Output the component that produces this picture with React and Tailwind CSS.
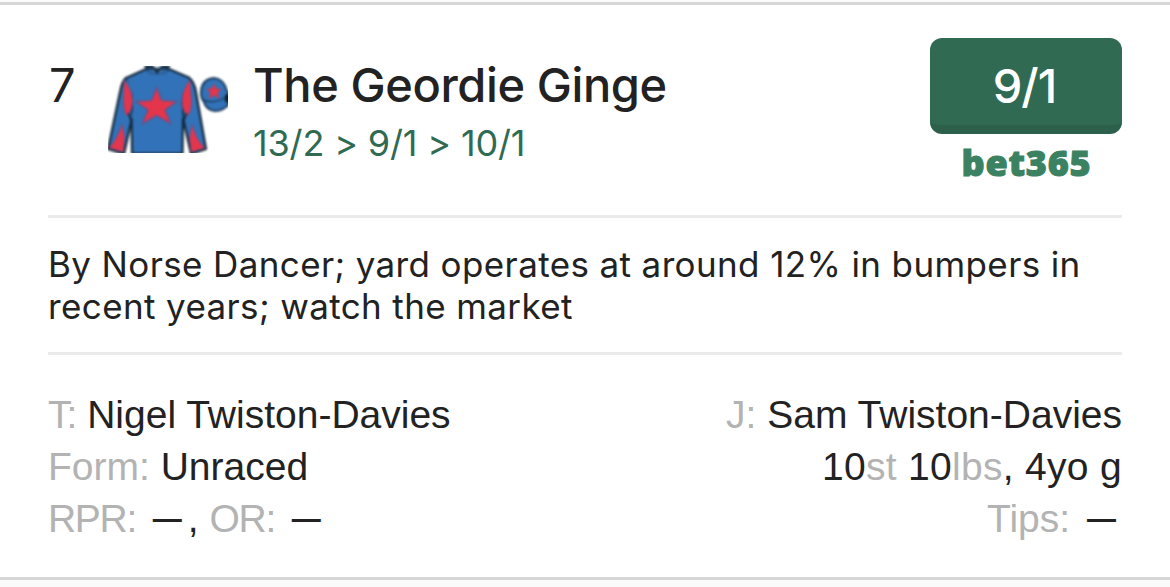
import React from 'react';

const runner = {
  number: 7,
  name: 'The Geordie Ginge',
  history: ['13/2', '9/1', '10/1'],
  odds: '9/1',
  bookmaker: 'bet365',
  comment:
    'By Norse Dancer; yard operates at around 12% in bumpers in recent years; watch the market',
  trainer: 'Nigel Twiston-Davies',
  jockey: 'Sam Twiston-Davies',
  form: 'Unraced',
};

const Silks = () => (
  <svg viewBox="0 0 120 87" className="w-[120px] h-[87px] shrink-0 overflow-hidden" aria-hidden="true">
    <g className="blur-[0.8px]">
      {/* sleeves */}
      <g stroke="#14283a" strokeWidth="2.2" strokeLinejoin="round">
        <path d="M18 12 Q14 15 12 26 L0 83 L16 88 L24 52 L25 20 Z" fill="#3272b8" />
        <path d="M81 12 Q86 15 88 26 L98 83 L83 88 L75 52 L73 20 Z" fill="#3272b8" />
      </g>
      <g fill="#e5354b" stroke="#65508b" strokeWidth="0.8">
        <path d="M16 14 Q24.500 24 24.500 35 Q24.500 44 19 50 Q15.500 46 15.500 36 Z" />
        <path d="M82 14 Q74 24 74 35 Q74 44 79 50 Q83.500 46 83.500 36 Z" />
        <path d="M14 58 L16.500 70 L15.500 86 L1 82 Q10 72 14 58 Z" />
        <path d="M84 58 Q88 74 97 82 L83 86 L81.500 72 Z" />
      </g>
      {/* body */}
      <path
        d="M38 3 L18 12 Q25 22 25 36 Q25 46 23 52 L24 88 H75 L75 52 Q73.500 46 73.500 36 Q73.500 22 82 12 L61 3 L49 7 Z"
        fill="#3272b8"
      />
      <path d="M38 3 L18 12 M61 3 L82 12 M23.500 52 L24 88 M75 52 L74.500 88 M24 87.500 H75" stroke="#14283a" strokeWidth="2.2" fill="none" />
      <path d="M20.500 47 L23.500 56 M78.500 47 L75 56" stroke="#14283a" strokeWidth="1.8" />
      {/* collar */}
      <path d="M36 -1 H62 L61 5 L53 4 L49 9 L45 4 L38 5 Z" fill="#1b3650" />
      <path d="M38 5 L43 3 L49 8 L55 3 L61 5 L58 9 H41 Z" fill="#2c65a4" />
      <path d="M45 -1 H54 Q52 2 49.500 2 Q46 2 45 -1 Z" fill="#e8edf0" />
      <path
        d="M48.5 21 L53.5 34.5 L69 35.5 L57 44 L63 58 L48.5 49.5 L34 58 L40 44 L28 35.5 L43.5 34.5 Z"
        fill="#e5354b"
        stroke="#65508b"
        strokeWidth="1.2"
      />
      {/* cap */}
      <path d="M93 25 Q94 13 106 12 Q116 13 119 25 L122 27 V37 Q116 45 107 45 Q98 44 96 36 Q92.500 32 93 25 Z" fill="#3272b8" stroke="#1d3c5c" strokeWidth="2" />
      <path d="M95 34 Q106 38.500 118 31" stroke="#1d3c5c" strokeWidth="1.4" fill="none" />
      <path d="M117 29 L122 27 V37 L117 36 Z" fill="#10202e" />
      <path d="M106 18 L108 22.800 L113 23.200 L109.300 26.700 L111 32 L106 29.300 L101 32 L102.700 26.700 L99 23.200 L104 22.800 Z" fill="#e5354b" stroke="#b3405f" strokeWidth="1" />
    </g>
  </svg>
);

const Label = ({ children, className = '' }) => (
  <span className={`text-[#b3b3b3] ${className}`}>{children}</span>
);

const Dash = () => (
  <span className="mx-1.5 inline-block align-[3px] text-[29px] font-bold leading-none">—</span>
);

const App = () => {
  return (
    <div className="h-[587px] w-[1170px] overflow-hidden bg-[#fafafa] pt-[2px] font-['Inter',sans-serif] text-[#222222]">
      <div className="flex h-[578px] flex-col border-y-[3px] border-[#d6d6d6] bg-white px-12">
        <div className="flex h-[210px] pt-[33px]">
          <div className="w-[60px] pl-px pt-[17px] text-[47px] leading-[60px]">{runner.number}</div>
          <div className="pt-[28px]">
            <Silks />
          </div>
          <div className="flex-1 whitespace-nowrap pl-[25px] pt-[17px]">
            <h1 className="text-[47px] font-medium leading-[60px] tracking-[-0.4px]">{runner.name}</h1>
            <p className="text-[36px] leading-[56px] tracking-[-0.15px] text-[#2f6b53] [font-feature-settings:'calt'_0]">
              {runner.history.join(' > ')}
            </p>
          </div>
          <div className="flex w-48 flex-col items-center">
            <button className="h-24 w-48 rounded-xl border-b-[9px] border-[#2d604b] bg-[#316a52] pr-[3px] pt-[8px] text-[47px] font-medium leading-none tracking-[-1px] text-white">
              {runner.odds}
            </button>
            <span className="mt-[7px] pl-px font-['Open_Sans','Noto_Sans',sans-serif] text-[36px] font-extrabold leading-[44px] tracking-[0.8px] text-[#3a8262] [-webkit-text-stroke:1px_#3a8262]">
              {runner.bookmaker}
            </span>
          </div>
        </div>

        <div className="h-[140px] border-y-[3px] border-[#ebebeb] pt-[25px]">
          <p className="text-[35px] leading-[42px] tracking-[0.38px]">{runner.comment}</p>
        </div>

        <div className="flex justify-between whitespace-nowrap pt-[34px] font-['Liberation_Sans',sans-serif] text-[39px] leading-[52px]">
          <div>
            <p><Label className="tracking-[-1px]">T:</Label> {runner.trainer}</p>
            <p><Label>Form:</Label> {runner.form}</p>
            <p>
              <Label className="tracking-[-1.3px]">RPR:</Label> <Dash />, <Label className="tracking-[-1.3px]">OR:</Label> <Dash />
            </p>
          </div>
          <div className="text-right">
            <p><Label>J:</Label> {runner.jockey}</p>
            <p className="tracking-[0.3px]">10<Label>st</Label> 10<Label>lbs</Label>, 4yo g</p>
            <p><Label>Tips:</Label> <Dash /></p>
          </div>
        </div>
      </div>
    </div>
  );
};

export default App;
